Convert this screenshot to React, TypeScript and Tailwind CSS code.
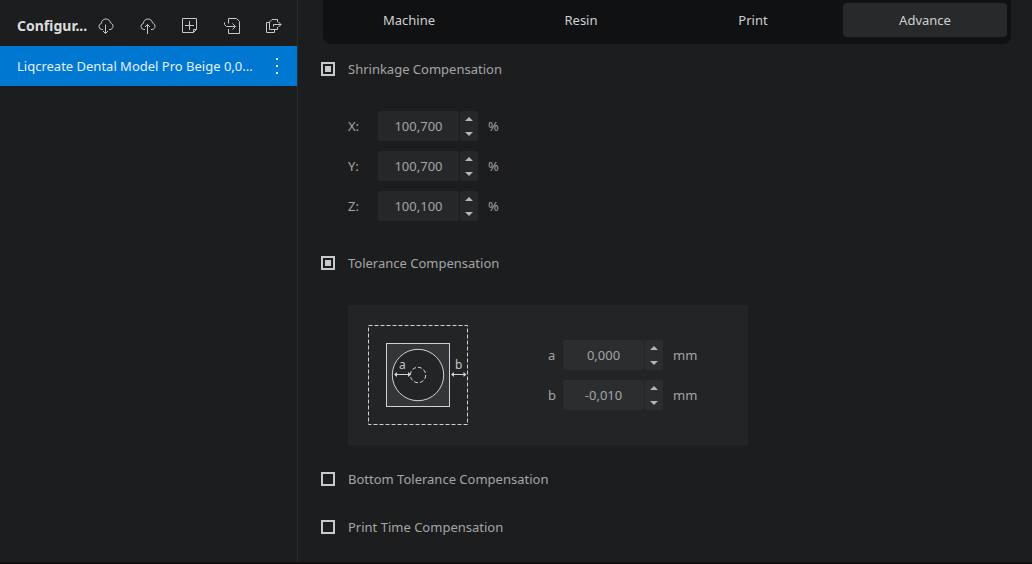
import React, { useState } from 'react';

const tabs = ['Machine', 'Resin', 'Print', 'Advance'];

const shrinkageFields = [
  { label: 'X:', value: '100,700' },
  { label: 'Y:', value: '100,700' },
  { label: 'Z:', value: '100,100' },
];

const toleranceFields = [
  { label: 'a', value: '0,000' },
  { label: 'b', value: '-0,010' },
];

const cloudPath =
  'M5 11.5H3.8A3.1 3.1 0 0 1 1 8.4A3.1 3.1 0 0 1 3.4 5.4C3.4 2.8 5.4 1 8 1C10.4 1 12.1 2.6 12.5 4.9C14.1 5.3 15 6.6 15 8.2C15 10 13.7 11.5 12 11.5H11';

const headerActions = [
  { name: 'Download profile', paths: [cloudPath, 'M7.5 6.5V15.5', 'M5 13L7.5 15.5L10 13'] },
  { name: 'Upload profile', paths: [cloudPath, 'M7.5 16V6.5', 'M5 9L7.5 6.5L10 9'] },
  { name: 'Add profile', paths: ['M11.5 14.5H0.5V0.5H14.5V11.5L11.5 14.5V11.5H14.5', 'M7.5 3V12', 'M3 7.5H12'] },
  {
    name: 'Import profile',
    paths: ['M4.5 5.5V0.5H12.5L15.5 3.5V15.5H4.5V11', 'M0.5 4.5V6.5L2.5 8.5H11', 'M8.5 5.5L11.5 8.5L8.5 11.5'],
  },
  {
    name: 'Export profile',
    paths: ['M11.5 4V1.5H6L3.5 4V11.5H11.5V9', 'M3.5 4.5H0.5V14.5H8.5V11.5', 'M7.5 8.5V6.5H15', 'M12.5 4L15 6.5L12.5 9'],
  },
];

interface CheckRowProps {
  label: string;
  defaultChecked?: boolean;
}

const CheckRow: React.FC<CheckRowProps> = ({ label, defaultChecked = false }) => (
  <label className="flex h-5 w-fit items-center gap-[13px]">
    <input
      type="checkbox"
      defaultChecked={defaultChecked}
      className="size-3.5 appearance-none border-2 border-[#c8c9ca] bg-clip-content p-0.5 checked:bg-[#c8c9ca]"
    />
    <span>{label}</span>
  </label>
);

interface SpinFieldProps {
  label: string;
  value: string;
  unit: string;
  labelClass: string;
  fieldClass: string;
}

const SpinField: React.FC<SpinFieldProps> = ({ label, value, unit, labelClass, fieldClass }) => {
  const [text, setText] = useState(value);

  const step = (amount: number) => {
    const next = parseFloat(text.replace(',', '.')) + amount;
    if (!Number.isNaN(next)) setText(next.toFixed(3).replace('.', ','));
  };

  return (
    <div className="flex h-[30px] items-center">
      <label htmlFor={`field-${label}`} className={labelClass}>
        {label}
      </label>
      <input
        id={`field-${label}`}
        type="text"
        value={text}
        onChange={(e) => setText(e.target.value)}
        className={`h-full w-[81px] rounded-xs text-center outline-none ${fieldClass}`}
      />
      <div className={`ml-px flex h-full w-[18px] flex-col rounded-xs ${fieldClass}`}>
        <button
          type="button"
          aria-label={`Increase ${label}`}
          onClick={() => step(0.01)}
          className="flex flex-1 items-center justify-center"
        >
          <svg width="8" height="4" viewBox="0 0 8 4" fill="#b4b5b6">
            <path d="M0 4L4 0L8 4Z" />
          </svg>
        </button>
        <button
          type="button"
          aria-label={`Decrease ${label}`}
          onClick={() => step(-0.01)}
          className="flex flex-1 items-center justify-center"
        >
          <svg width="8" height="4" viewBox="0 0 8 4" fill="#b4b5b6">
            <path d="M0 0L4 4L8 0Z" />
          </svg>
        </button>
      </div>
      <span className="ml-2.5">{unit}</span>
    </div>
  );
};

const ToleranceDiagram = () => (
  <svg width="100" height="100" viewBox="0 0 100 100" fill="none" stroke="#d0d1d2" className="shrink-0">
    <rect x="0.5" y="0.5" width="99" height="99" strokeDasharray="4 2" />
    <rect x="18.5" y="18.5" width="63" height="63" fill="#343536" />
    <circle cx="50" cy="50" r="25.7" fill="#232425" />
    <circle cx="50" cy="50" r="7.7" strokeDasharray="4 2" />
    <path d="M27 49.5H42M84 49.5H98" />
    <path
      d="M26 49.5L29 47V52ZM43 49.5L40 47V52ZM83 49.5L86 47V52ZM98.5 49.5L95.5 47V52Z"
      fill="#d0d1d2"
      stroke="none"
    />
    <text x="31" y="44" fontSize="12" fill="#c4c5c6" stroke="none">
      a
    </text>
    <text x="87" y="44" fontSize="12" fill="#c4c5c6" stroke="none">
      b
    </text>
  </svg>
);

const Sidebar = () => (
  <aside className="w-[298px] shrink-0 border-r border-[#2a2b2d]">
    <header className="flex h-[46px] items-center pt-1.5 pr-[15px] pl-[17px]">
      <h1 className="text-sm font-bold whitespace-nowrap text-[#dcdddd]">Configur...</h1>
      <div className="ml-auto flex gap-[26px]">
        {headerActions.map((action) => (
          <button key={action.name} type="button" aria-label={action.name}>
            <svg width="16" height="16" viewBox="0 0 16 16" fill="none" stroke="#c6c7c8">
              {action.paths.map((d) => (
                <path key={d} d={d} />
              ))}
            </svg>
          </button>
        ))}
      </div>
    </header>

    <div className="flex h-10 items-center bg-[#0078d2] pr-3 pl-[17px] text-[#e4f1fa]">
      <span className="whitespace-nowrap">Liqcreate Dental Model Pro Beige 0,0...</span>
      <button type="button" aria-label="Profile menu" className="ml-auto flex w-4 justify-center">
        <svg width="2" height="16" viewBox="0 0 2 16" fill="#e4f1fa">
          <path d="M0 0H2V2H0ZM0 7H2V9H0ZM0 14H2V16H0Z" />
        </svg>
      </button>
    </div>
  </aside>
);

const App = () => {
  const [activeTab, setActiveTab] = useState('Advance');

  return (
    <div className="flex min-h-screen border-b-2 border-[#151012] bg-[#1c1d1f] font-['Noto_Sans',sans-serif] text-[13px] leading-5 text-[#a4a5a6]">
      <Sidebar />

      <main className="min-w-0 flex-1 pr-[21px] pl-[23px]">
        {/* Settings tabs */}
        <nav className="ml-0.5 grid h-11 grid-cols-4 rounded-b-lg bg-[#101112] pt-[3px] pb-[7px]">
          {tabs.map((tab) => (
            <button
              key={tab}
              type="button"
              onClick={() => setActiveTab(tab)}
              className={`mx-1 rounded text-[#cfd0d0] ${tab === activeTab ? 'bg-[#28292b]' : ''}`}
            >
              {tab}
            </button>
          ))}
        </nav>

        <section className="mt-[15px]">
          <CheckRow label="Shrinkage Compensation" defaultChecked />
          <div className="mt-8 ml-[27px] flex flex-col gap-2.5">
            {shrinkageFields.map((field) => (
              <SpinField key={field.label} {...field} unit="%" labelClass="w-[30px]" fieldClass="bg-[#262728]" />
            ))}
          </div>
        </section>

        <section className="mt-8">
          <CheckRow label="Tolerance Compensation" defaultChecked />
          <div className="mt-8 ml-[27px] flex w-[400px] max-w-full items-center bg-[#232426] p-5">
            <ToleranceDiagram />
            <div className="ml-20 flex flex-col gap-2.5">
              {toleranceFields.map((field) => (
                <SpinField key={field.label} {...field} unit="mm" labelClass="w-[15px]" fieldClass="bg-[#2c2d2e]" />
              ))}
            </div>
          </div>
        </section>

        <section className="mt-6 flex flex-col gap-7">
          <CheckRow label="Bottom Tolerance Compensation" />
          <CheckRow label="Print Time Compensation" />
        </section>
      </main>
    </div>
  );
};

export default App;
